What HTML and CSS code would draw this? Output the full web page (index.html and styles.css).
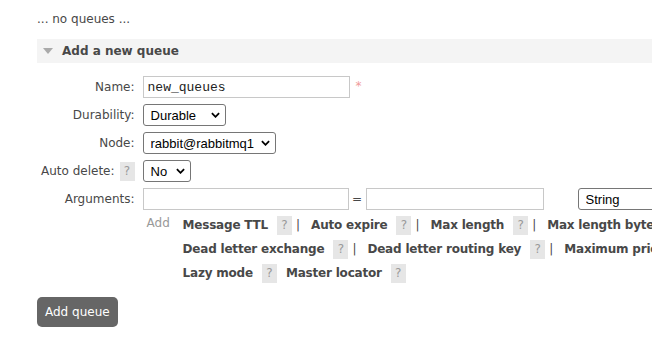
FILE: index.html
```html
<!DOCTYPE html>
<html lang="en">
<head>
  <meta charset="UTF-8">
  <title>Queues</title>
  <link rel="stylesheet" href="styles.css">
</head>
<body>
  <div class="main">
    <p class="empty">... no queues ...</p>

    <div class="section-head">
      <span class="triangle"></span>
      <h2>Add a new queue</h2>
    </div>

    <table class="form">
      <tr>
        <th>Name:</th>
        <td>
          <div class="field">
            <input type="text" class="name-input" value="new_queues">
            <span class="mand">*</span>
          </div>
        </td>
      </tr>
      <tr>
        <th>Durability:</th>
        <td>
          <span class="select">
            <select class="sel-durable"><option>Durable</option><option>Transient</option></select>
            <svg class="chev" viewBox="0 0 10 6"><path d="M1 1l4 4 4-4"/></svg>
          </span>
        </td>
      </tr>
      <tr>
        <th>Node:</th>
        <td>
          <span class="select">
            <select class="sel-node"><option>rabbit@rabbitmq1</option></select>
            <svg class="chev" viewBox="0 0 10 6"><path d="M1 1l4 4 4-4"/></svg>
          </span>
        </td>
      </tr>
      <tr>
        <th>Auto delete:<span class="help">?</span></th>
        <td>
          <span class="select">
            <select class="sel-no"><option>No</option><option>Yes</option></select>
            <svg class="chev" viewBox="0 0 10 6"><path d="M1 1l4 4 4-4"/></svg>
          </span>
        </td>
      </tr>
      <tr>
        <th>Arguments:</th>
        <td>
          <div class="field">
            <input type="text" class="arg-key">
            <span class="eq">=</span>
            <input type="text" class="arg-value">
            <span class="select type-select">
              <select class="sel-type"><option>String</option><option>Number</option><option>Boolean</option><option>List</option></select>
              <svg class="chev" viewBox="0 0 10 6"><path d="M1 1l4 4 4-4"/></svg>
            </span>
          </div>
        </td>
      </tr>
      <tr class="add-row">
        <th></th>
        <td>
          <div class="add-args">
            <span class="add">Add</span>
            <div class="links">
              <div class="line">
                <span class="arg"><b>Message TTL</b><span class="help">?</span></span><span class="sep">|</span><span class="arg"><b>Auto expire</b><span class="help">?</span></span><span class="sep">|</span><span class="arg"><b>Max length</b><span class="help">?</span></span><span class="sep">|</span><span class="arg"><b>Max length bytes</b><span class="help">?</span></span><span class="sep">|</span><span class="arg"><b>Overflow behaviour</b><span class="help">?</span></span>
              </div>
              <div class="line">
                <span class="arg"><b>Dead letter exchange</b><span class="help">?</span></span><span class="sep">|</span><span class="arg"><b>Dead letter routing key</b><span class="help">?</span></span><span class="sep">|</span><span class="arg"><b>Maximum priority</b><span class="help">?</span></span>
              </div>
              <div class="line">
                <span class="arg"><b>Lazy mode</b><span class="help">?</span></span><span class="arg"><b>Master locator</b><span class="help">?</span></span>
              </div>
            </div>
          </div>
        </td>
      </tr>
    </table>

    <button class="submit">Add queue</button>
  </div>
</body>
</html>
```

FILE: styles.css
```css
html, body {
  margin: 0;
  overflow: hidden;
}

body {
  font-family: "DejaVu Sans", Verdana, sans-serif;
  font-size: 12px;
  color: #484848;
  background: #fff;
}

.main {
  padding: 10px 0 0 37px;
}

.empty {
  margin: 0 0 11px;
  line-height: 18px;
}

.section-head {
  display: flex;
  align-items: center;
  height: 24px;
  padding-left: 6px;
  background: #f4f4f4;
}

.triangle {
  width: 0;
  height: 0;
  border-left: 5px solid transparent;
  border-right: 5px solid transparent;
  border-top: 6px solid #aaa;
  margin-right: 9px;
}

.section-head h2 {
  margin: 0;
  font-size: 12px;
  font-weight: bold;
  color: #484848;
}

.form {
  border-collapse: collapse;
  margin-top: 10px;
  white-space: nowrap;
}

.form th {
  width: 93px;
  height: 22px;
  padding: 3px 8px 3px 4px;
  text-align: right;
  font-weight: normal;
  vertical-align: middle;
  line-height: 18px;
}

.form td {
  height: 22px;
  padding: 3px 0;
  vertical-align: middle;
  line-height: 18px;
}

.field {
  display: flex;
  align-items: center;
  height: 22px;
}

input[type=text] {
  box-sizing: border-box;
  height: 22px;
  border: 1px solid #c8c8c8;
  padding: 0 4px;
  margin: 0;
  font-family: "Liberation Mono", "Courier New", monospace;
  font-size: 13px;
  color: #222;
  outline: none;
}

.name-input {
  width: 207px;
}

.mand {
  color: #f09a9a;
  margin-left: 6px;
  margin-top: -2px;
  font-size: 12px;
}

.select {
  position: relative;
  display: block;
  width: max-content;
  height: 22px;
}

.select select {
  display: block;
  appearance: none;
  -webkit-appearance: none;
  box-sizing: border-box;
  height: 22px;
  margin: 0;
  padding: 0 0 0 7px;
  border: 1px solid #767676;
  border-radius: 3px;
  background: #fff;
  font-family: "Liberation Sans", Arial, sans-serif;
  font-size: 13px;
  color: #000;
  outline: none;
}

.chev {
  position: absolute;
  right: 6px;
  top: 8px;
  width: 9px;
  height: 6px;
  pointer-events: none;
}

.chev path {
  fill: none;
  stroke: #000;
  stroke-width: 2;
}

.sel-durable { width: 83px; }
.sel-node { width: 133px; }
.sel-no { width: 48px; }
.sel-type { width: 100px; }

.arg-key { width: 206px; }
.arg-value { width: 178px; }

.eq {
  width: 17px;
  text-align: center;
}

.type-select {
  margin-left: 34px;
}

.help {
  display: inline-block;
  width: 15px;
  height: 19px;
  line-height: 19px;
  margin-left: 5px;
  text-align: center;
  background: #e6e6e6;
  color: #999;
  font-weight: normal;
  letter-spacing: 0;
  vertical-align: middle;
}

.add-row th,
.add-row td {
  padding: 0;
  height: auto;
}

.add-args {
  display: flex;
}

.add {
  width: 36px;
  padding-left: 4px;
  line-height: 20px;
  color: #999;
}

.links .line {
  line-height: 24px;
  height: 24px;
}

.links b {
  color: #484848;
  letter-spacing: -0.2px;
}

.links .help {
  margin-left: 9px;
}

.arg + .arg {
  margin-left: 9px;
}

.sep {
  margin: 0 11px 0 4px;
}

.submit {
  margin-top: 12px;
  height: 30px;
  padding: 0 8px;
  border: none;
  border-radius: 5px;
  background: #666;
  color: #fff;
  font-family: "DejaVu Sans", Verdana, sans-serif;
  font-size: 12px;
  cursor: pointer;
}
```
